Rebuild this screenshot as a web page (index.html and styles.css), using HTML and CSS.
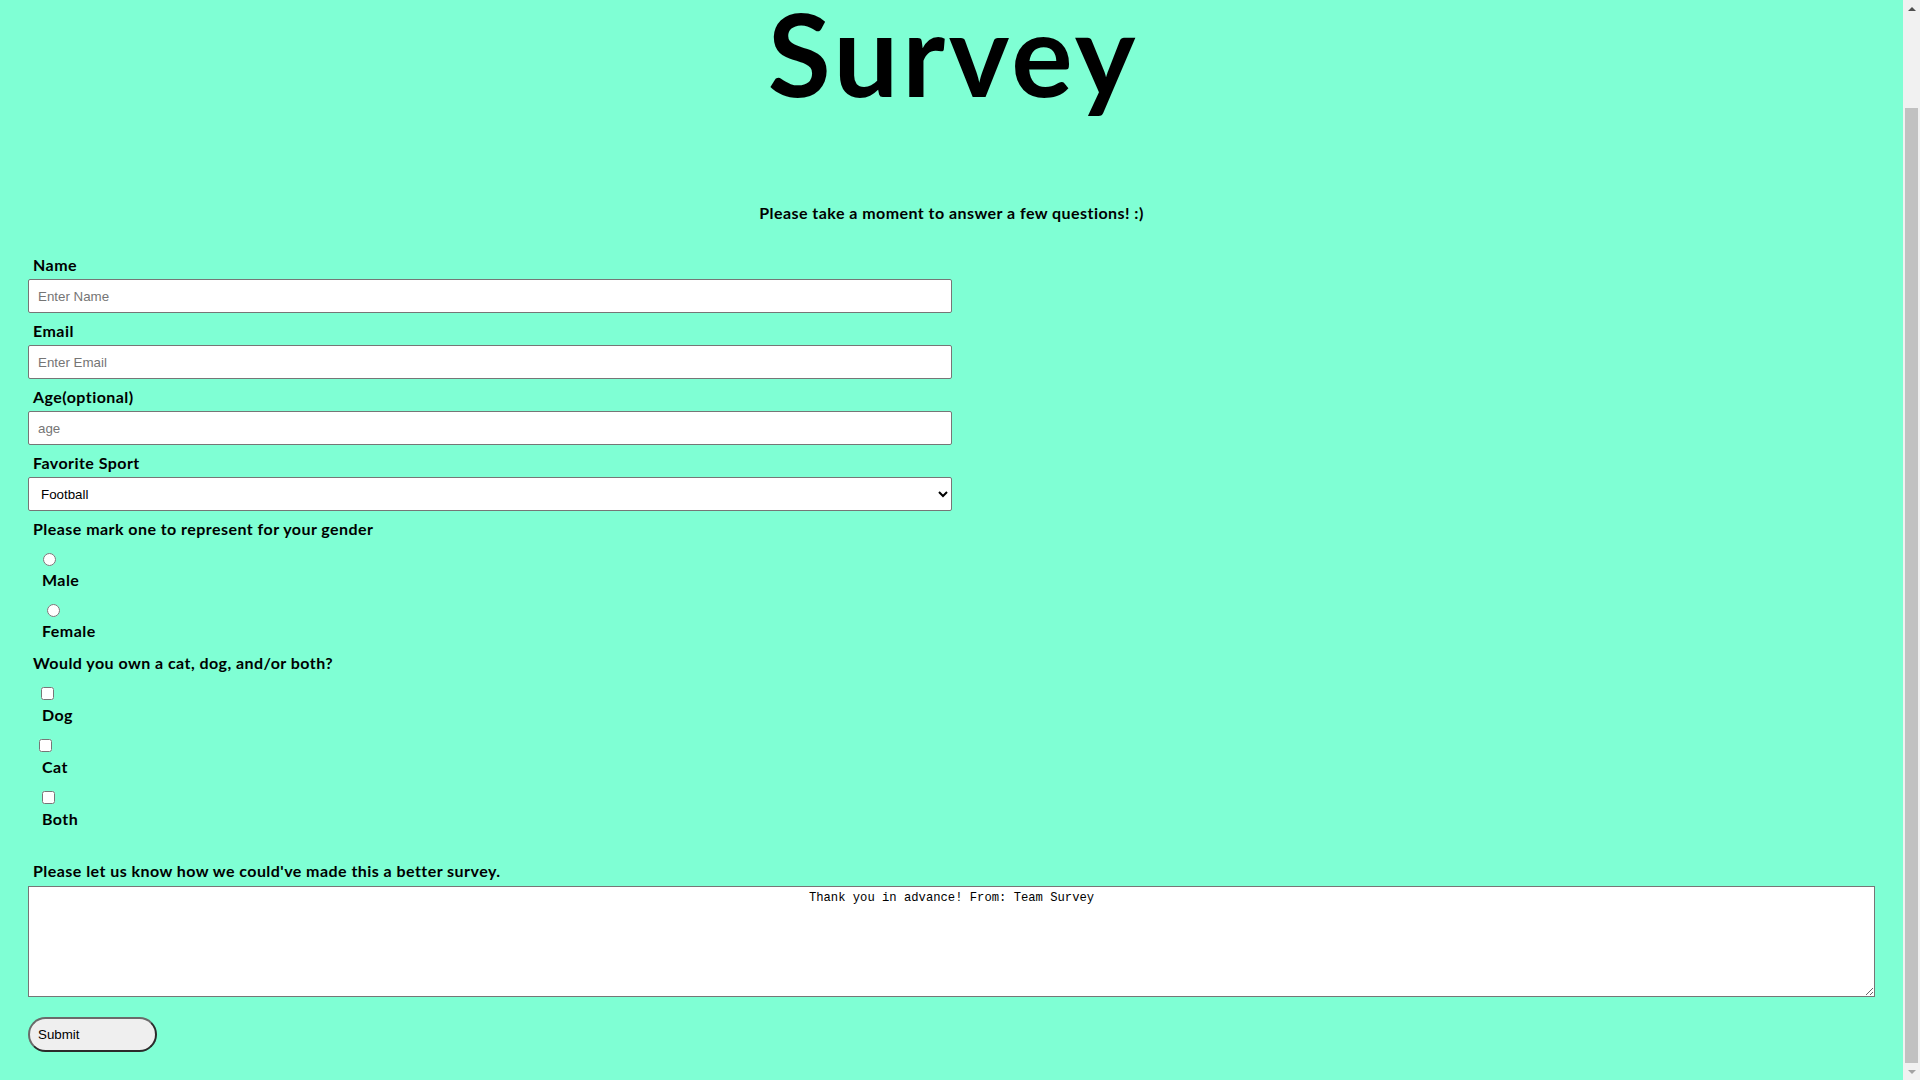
FILE: index.html
```html
<!DOCTYPE html>
<html lang="en">
<head>
<meta charset="utf-8">
<title>Survey</title>
<link rel="stylesheet" href="styles.css">
</head>
<body>
<div class="page">
  <main class="content">
    <header class="header">
      <h1 class="title">Survey</h1>
      <p class="description">Please take a moment to answer a few questions! :)</p>
    </header>
    <form class="survey-form">
      <div class="field">
        <label class="field-label" for="name">Name</label>
        <input class="text-input" id="name" type="text" placeholder="Enter Name">
      </div>
      <div class="field">
        <label class="field-label" for="email">Email</label>
        <input class="text-input" id="email" type="text" placeholder="Enter Email">
      </div>
      <div class="field">
        <label class="field-label" for="age">Age(optional)</label>
        <input class="text-input" id="age" type="text" placeholder="age">
      </div>
      <div class="field">
        <label class="field-label" for="sport">Favorite Sport</label>
        <select class="text-input select-input" id="sport">
          <option>Football</option>
          <option>Basketball</option>
          <option>Baseball</option>
          <option>Soccer</option>
        </select>
      </div>
      <div class="group group-gender">
        <p class="field-label group-label">Please mark one to represent for your gender</p>
        <label class="choice"><input class="choice-input radio-male" type="radio" name="gender" value="male"><span class="choice-text">Male</span></label>
        <label class="choice"><input class="choice-input radio-female" type="radio" name="gender" value="female"><span class="choice-text">Female</span></label>
      </div>
      <div class="group group-pets">
        <p class="field-label group-label">Would you own a cat, dog, and/or both?</p>
        <label class="choice choice-check"><input class="choice-input check-dog" type="checkbox" value="dog"><span class="choice-text">Dog</span></label>
        <label class="choice choice-check"><input class="choice-input check-cat" type="checkbox" value="cat"><span class="choice-text">Cat</span></label>
        <label class="choice choice-check"><input class="choice-input check-both" type="checkbox" value="both"><span class="choice-text">Both</span></label>
      </div>
      <div class="field field-comments">
        <label class="field-label comments-label" for="comments">Please let us know how we could've made this a better survey.</label>
        <textarea class="comments" id="comments">Thank you in advance! From: Team Survey</textarea>
      </div>
      <button class="submit" type="submit">Submit</button>
    </form>
  </main>
  <aside class="scrollbar" aria-hidden="true">
    <div class="scroll-btn scroll-up"></div>
    <div class="scroll-track"><div class="scroll-thumb"></div></div>
    <div class="scroll-btn scroll-down"></div>
  </aside>
</div>
</body>
</html>
```
FILE: styles.css
```css
html, body {
  margin: 0;
  padding: 0;
  height: 100%;
  overflow: hidden;
}

body {
  background: #7fffd4;
  color: #000;
  font-family: Lato, "Open Sans", sans-serif;
}

.page {
  display: flex;
  height: 100vh;
}

.content {
  flex: 1;
  min-width: 0;
}

.header {
  text-align: center;
}

.title {
  margin: 2px 0 0;
  padding-left: 4px;
  font-size: 115px;
  line-height: 100px;
  font-weight: 700;
  letter-spacing: 3.7px;
}

.description {
  margin: 101px 0 0;
  font-size: 16px;
  line-height: 20px;
  font-weight: 700;
  letter-spacing: 0.45px;
}

.survey-form {
  padding: 32px 28px 0;
}

.field {
  margin-bottom: 8px;
}

.field-label {
  display: block;
  margin: 0 0 4px;
  padding-left: 5px;
  font-size: 16px;
  line-height: 20px;
  font-weight: 700;
  letter-spacing: 0.45px;
}

.text-input {
  display: block;
  box-sizing: border-box;
  width: 50%;
  height: 34px;
  margin: 0;
  padding: 0 9px;
  border: 1px solid #767676;
  border-radius: 2px;
  background: #fff;
  color: #000;
  font-family: "Liberation Sans", Arial, sans-serif;
  font-size: 13.333px;
}

.text-input::placeholder {
  color: #757575;
}

.select-input {
  padding-left: 8px;
}

.group {
  margin-bottom: 12px;
}

.group-label {
  margin-bottom: 0;
}

.choice {
  display: block;
}

.choice-input {
  display: block;
  width: 13px;
  height: 13px;
  margin: 14px 0 0 0;
}

.choice-text {
  display: block;
  margin-top: 4px;
  padding-left: 14px;
  font-size: 16px;
  line-height: 20px;
  font-weight: 700;
  letter-spacing: 0.45px;
}

.choice-check .choice-text {
  margin-top: 5px;
}

.radio-male { margin-left: 15px; }
.radio-female { margin-left: 19px; }
.check-dog { margin-left: 13px; }
.check-cat { margin-left: 11px; }
.check-both { margin-left: 14px; }

.group-pets {
  margin-bottom: 32px;
}

.comments-label {
  margin-bottom: 5px;
}

.field-comments {
  margin-bottom: 20px;
}

.comments {
  display: block;
  box-sizing: border-box;
  width: 100%;
  height: 111px;
  margin: 0;
  padding: 4px 2px 2px;
  border: 1px solid #767676;
  background: #fff;
  color: #000;
  font-family: "Liberation Mono", monospace;
  font-size: 12.2px;
  text-align: center;
  resize: both;
}

.submit {
  display: block;
  box-sizing: border-box;
  width: 129px;
  height: 35px;
  margin: 0;
  padding: 0 8px;
  border: 2px solid;
  border-color: #6a6a6a #2b2b2b #2b2b2b #6a6a6a;
  border-radius: 18px;
  background: #efefef;
  color: #000;
  font-family: "Liberation Sans", Arial, sans-serif;
  font-size: 13.333px;
  text-align: left;
}

.scrollbar {
  flex: 0 0 17px;
  display: flex;
  flex-direction: column;
  background: #f1f1f1;
}

.scroll-btn {
  flex: 0 0 17px;
  display: flex;
  align-items: center;
  justify-content: center;
}

.scroll-up::before {
  content: "";
  border-left: 4px solid transparent;
  border-right: 4px solid transparent;
  border-bottom: 4px solid #505050;
}

.scroll-down::before {
  content: "";
  border-left: 4px solid transparent;
  border-right: 4px solid transparent;
  border-top: 4px solid #a3a3a3;
}

.scroll-track {
  flex: 1;
  display: flex;
  flex-direction: column;
  padding: 91px 2px 0;
}

.scroll-thumb {
  flex: 1;
  background: #c1c1c1;
}
```
